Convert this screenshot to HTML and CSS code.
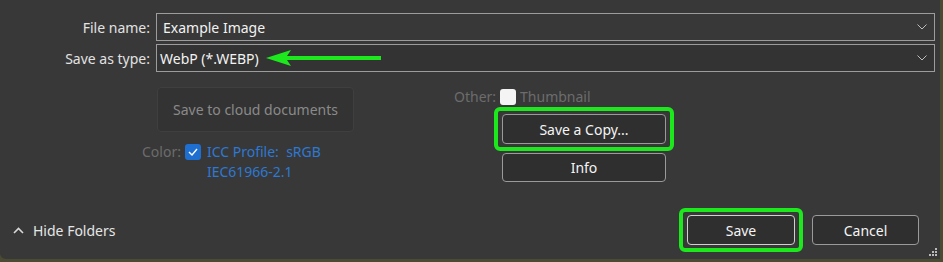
FILE: index.html
```html
<!DOCTYPE html>
<html lang="en">
<head>
  <meta charset="UTF-8">
  <meta name="viewport" content="width=device-width, initial-scale=1.0">
  <title>Save a Copy</title>
  <link rel="stylesheet" href="styles.css">
</head>
<body>
  <div class="dialog">
    <div class="fields">
      <label class="field-label" for="fileName">File name:</label>
      <div class="combo">
        <input class="combo-input" id="fileName" type="text" value="Example Image">
        <svg class="chevron" width="10" height="6" viewBox="0 0 10 6"><path d="M0.5 0.5 L5 5 L9.5 0.5" fill="none" stroke="#bdbdbd" stroke-width="1"/></svg>
      </div>
      <label class="field-label" for="fileType">Save as type:</label>
      <div class="combo combo-type">
        <span class="combo-value" id="fileType">WebP (*.WEBP)</span>
        <svg class="chevron" width="10" height="6" viewBox="0 0 10 6"><path d="M0.5 0.5 L5 5 L9.5 0.5" fill="none" stroke="#bdbdbd" stroke-width="1"/></svg>
      </div>
    </div>

    <svg class="arrow" width="120" height="20" viewBox="0 0 120 20">
      <path d="M1 9 L26 1 L22 7 L116 7 L116 11 L22 11 L26 17 Z" fill="#1de81d"/>
    </svg>

    <div class="options">
      <div class="col-left">
        <button class="btn-cloud" disabled>Save to cloud documents</button>
        <div class="color-row">
          <span class="muted">Color:</span>
          <span class="check check-on">
            <svg width="10" height="8" viewBox="0 0 10 8"><path d="M1 4 L4 7 L9 1" fill="none" stroke="#fff" stroke-width="1.4"/></svg>
          </span>
          <span class="icc">ICC Profile:&nbsp; sRGB<br>IEC61966-2.1</span>
        </div>
      </div>
      <div class="col-right">
        <div class="other-row">
          <span class="muted">Other:</span>
          <span class="check check-off"></span>
          <span class="muted">Thumbnail</span>
        </div>
        <div class="highlight">
          <button class="btn btn-copy">Save a Copy...</button>
        </div>
        <button class="btn btn-copy btn-info">Info</button>
      </div>
    </div>

    <div class="footer">
      <div class="hide-folders">
        <svg width="11" height="7" viewBox="0 0 11 7"><path d="M1 6 L5.5 1.5 L10 6" fill="none" stroke="#d8d8d8" stroke-width="1.6"/></svg>
        <span>Hide Folders</span>
      </div>
      <div class="actions">
        <div class="highlight highlight-save">
          <button class="btn btn-default">Save</button>
        </div>
        <button class="btn btn-cancel">Cancel</button>
      </div>
    </div>

    <svg class="grip" width="10" height="10" viewBox="0 0 10 10">
      <rect x="7" y="1" width="2" height="2" fill="#bbb"/>
      <rect x="4" y="4" width="2" height="2" fill="#bbb"/>
      <rect x="7" y="4" width="2" height="2" fill="#bbb"/>
      <rect x="1" y="7" width="2" height="2" fill="#bbb"/>
      <rect x="4" y="7" width="2" height="2" fill="#bbb"/>
      <rect x="7" y="7" width="2" height="2" fill="#bbb"/>
    </svg>
  </div>
</body>
</html>
```

FILE: styles.css
```css
body {
  margin: 0;
  background: #4a4b32;
  font-family: "Noto Sans", "Open Sans", sans-serif;
  font-size: 14px;
  color: #e6e6e6;
}
.dialog {
  position: relative;
  width: 940px;
  height: 259px;
  background: #383838;
  box-sizing: border-box;
  padding-top: 13px;
  border-bottom-left-radius: 6px;
}
.fields {
  display: grid;
  grid-template-columns: 156px 779px;
  row-gap: 3px;
}
.field-label {
  text-align: right;
  padding-right: 6px;
  align-self: center;
  color: #e2e2e2;
}
.combo {
  display: flex;
  align-items: center;
  height: 28px;
  box-sizing: border-box;
  border: 1px solid #9c9c9c;
  background: #383838;
}
.combo-type {
  background: #333333;
}
.combo-input {
  flex: 1;
  background: transparent;
  border: none;
  color: #f2f2f2;
  font: inherit;
  padding: 0 0 0 6px;
  outline: none;
}
.combo-value {
  flex: 1;
  padding-left: 3px;
  color: #f2f2f2;
}
.chevron {
  margin-right: 7px;
}
.arrow {
  position: absolute;
  left: 265px;
  top: 49px;
}
.options {
  display: flex;
  margin-top: 15px;
}
.col-left {
  margin-left: 142px;
  width: 312px;
}
.btn-cloud {
  margin-left: 15px;
  width: 197px;
  height: 45px;
  background: #333333;
  border: 1px solid #3f3f3f;
  border-radius: 4px;
  color: #8a8a8a;
  font: inherit;
}
.color-row {
  display: flex;
  align-items: flex-start;
  margin-top: 10px;
  line-height: 20px;
}
.muted {
  color: #6c6c6c;
}
.check {
  display: inline-flex;
  align-items: center;
  justify-content: center;
  width: 16px;
  height: 16px;
  border-radius: 3px;
  box-sizing: border-box;
  margin: 2px 4px 0 4px;
}
.check-on {
  background: #1f6fd0;
}
.check-off {
  background: #f4f4f4;
  margin-top: 0;
}
.icc {
  color: #2d79d4;
  padding-left: 2px;
}
.col-right {
  display: flex;
  flex-direction: column;
  align-items: flex-start;
  padding-top: 2px;
}
.other-row {
  display: flex;
  align-items: center;
  line-height: 16px;
  margin-bottom: 2px;
}
.highlight {
  margin-left: 40px;
  border: 4px solid #1de81d;
  border-radius: 6px;
  padding: 3px 4px;
}
.btn {
  height: 30px;
  border-radius: 4px;
  background: #2f2f2f;
  border: 1px solid #9a9a9a;
  color: #f4f4f4;
  font: inherit;
}
.btn-copy {
  width: 164px;
}
.btn-info {
  margin-left: 48px;
  margin-top: 2px;
  height: 29px;
}
.footer {
  display: flex;
  justify-content: space-between;
  align-items: center;
  margin-top: 26px;
  padding-right: 21px;
}
.hide-folders {
  display: flex;
  align-items: center;
  gap: 9px;
  padding-left: 13px;
  color: #e6e6e6;
}
.actions {
  display: flex;
  align-items: center;
  gap: 9px;
}
.highlight-save {
  margin-left: 0;
}
.btn-default {
  width: 108px;
  border-color: #d0d0d0;
}
.btn-cancel {
  width: 107px;
}
.grip {
  position: absolute;
  right: 2px;
  bottom: 2px;
}
```
